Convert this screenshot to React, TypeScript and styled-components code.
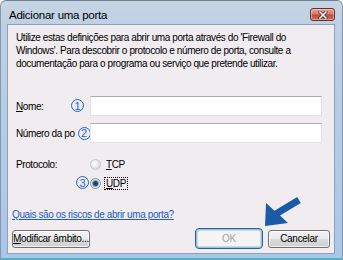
import React from 'react';
import styled, { createGlobalStyle } from 'styled-components';

const GlobalStyle = createGlobalStyle`
  html, body {
    margin: 0;
    padding: 0;
    background: #ffffff;
  }
  body {
    width: 343px;
    height: 260px;
    overflow: hidden;
    font-family: "Liberation Sans", Arial, sans-serif;
  }
`;

const Window = styled.div`
  position: relative;
  width: 343px;
  height: 260px;
  box-sizing: border-box;
  display: flex;
  flex-direction: column;
  padding: 0 7px 4px 6px;
  background: linear-gradient(to bottom, #c8d5e3 0px, #bdd0e5 24px, #aac7e8 100%);
  border-top: 1px solid #6f7f93;
  border-left: 1px solid #8797ab;
  border-right: 1px solid #8797ab;
  border-bottom: 2px solid #4fb0cc;
  border-radius: 6px 6px 0 0;
  overflow: hidden;
`;

const TitleBar = styled.div`
  height: 23px;
  flex: none;
  display: flex;
  justify-content: space-between;
  align-items: flex-start;
`;

const Title = styled.span`
  margin: 7px 0 0 2px;
  font-size: 11.5px;
  letter-spacing: -0.25px;
  line-height: 14px;
  color: #000;
`;

const CloseButton = styled.div`
  margin-top: 7px;
  width: 25px;
  height: 13px;
  box-sizing: border-box;
  display: flex;
  align-items: center;
  justify-content: center;
  border: 1px solid #6b2d28;
  border-radius: 3px;
  background: linear-gradient(to bottom, #e3a49c 0%, #d27a70 45%, #c04a3c 55%, #cc6a5c 100%);
  box-shadow: inset 0 0 0 1px rgba(255, 220, 210, 0.5);
`;

const Body = styled.div`
  flex: 1;
  display: flex;
  flex-direction: column;
  padding-bottom: 4px;
  background: #f0ecf0;
  border: 1px solid #8fa1b8;
`;

const Intro = styled.p`
  margin: 6px 8px 0 8px;
  font-size: 10px;
  letter-spacing: -0.4px;
  line-height: 13px;
  color: #000;
`;

const Form = styled.div`
  position: relative;
  margin: 26px 12px 0 8px;
  display: grid;
  grid-template-columns: 74px 232px;
  row-gap: 7px;
  align-items: center;
`;

const FieldLabel = styled.label`
  display: flex;
  align-items: center;
  font-size: 10px;
  letter-spacing: -0.4px;
  color: #000;
  white-space: nowrap;
`;

const TextBox = styled.input`
  width: 232px;
  height: 20px;
  box-sizing: border-box;
  margin: 0;
  padding: 0 3px;
  background: #fff;
  border: 1px solid #dfe3e9;
  border-top-color: #abadb3;
  outline: none;
`;

const ProtocolLabel = styled(FieldLabel)`
  align-self: start;
  margin-top: 5px;
  line-height: 19px;
`;

const RadioGroup = styled.div`
  margin-top: 5px;
  display: flex;
  flex-direction: column;
`;

const RadioRow = styled.div`
  height: 19px;
  display: flex;
  align-items: center;
  gap: 3px;
  font-size: 10px;
  letter-spacing: -0.4px;
  color: #000;
`;

const RadioDot = styled.span<{ $checked?: boolean }>`
  width: 11px;
  height: 11px;
  box-sizing: border-box;
  border-radius: 50%;
  border: 1px solid ${({ $checked }) => ($checked ? '#8d9aa4' : '#c4c8cc')};
  background: ${({ $checked }) =>
    $checked
      ? 'radial-gradient(circle, #1a3850 0, #284f6c 2px, #7fa6c2 3px, #dbe3ea 4px, #f4f4f4 6px)'
      : 'radial-gradient(circle at 40% 40%, #ffffff 0, #eeeeee 3px, #d6d6d6 6px)'};
`;

const RadioText = styled.span<{ $focused?: boolean }>`
  padding: 0 1px;
  line-height: 11px;
  border: 1px dotted ${({ $focused }) => ($focused ? '#000' : 'transparent')};
`;

const Marker = styled.span`
  width: 13px;
  height: 13px;
  flex: none;
  box-sizing: border-box;
  display: inline-flex;
  align-items: center;
  justify-content: center;
  border: 1.5px solid #2466c8;
  border-radius: 50%;
  background: #f0ecf0;
  color: #2466c8;
  font-size: 11px;
  letter-spacing: 0;
  line-height: 10px;
`;

const InlineMarker = styled(Marker)`
  margin: 0 0 0 3px;
`;

const PlacedMarker = styled(Marker)<{ $x: number; $y: number }>`
  position: absolute;
  left: ${({ $x }) => $x}px;
  top: ${({ $y }) => $y}px;
`;

const HelpLink = styled.a`
  align-self: flex-start;
  margin: 15px 0 0 4px;
  font-size: 10px;
  letter-spacing: -0.4px;
  line-height: 13px;
  color: #1f5bc6;
  text-decoration: underline;
`;

const Footer = styled.div`
  margin-top: auto;
  padding: 0 4px;
  display: flex;
  align-items: center;
  justify-content: space-between;
`;

const ButtonGroup = styled.div`
  display: flex;
  align-items: center;
  gap: 5px;
`;

const Button = styled.button<{ $width: number }>`
  width: ${({ $width }) => $width}px;
  height: 18px;
  box-sizing: border-box;
  margin: 0;
  padding: 0;
  font-family: "Liberation Sans", Arial, sans-serif;
  font-size: 10px;
  letter-spacing: -0.3px;
  color: #000;
  border: 1px solid #707070;
  border-radius: 3px;
  background: linear-gradient(to bottom, #f3f3f3 0%, #ebebeb 48%, #dcdcdc 52%, #cfcfcf 100%);
  box-shadow: inset 0 0 0 1px rgba(255, 255, 255, 0.7);
`;

const DefaultButton = styled(Button)`
  height: 21px;
  color: #a3a3a3;
  border: 1px solid #25609a;
  border-radius: 4px;
  background: #f4f4f4;
  box-shadow: inset 0 0 0 1px #8fc4ec, inset 0 0 0 2px #d6d6d6;
`;

const Overlay = styled.svg`
  position: absolute;
  top: -1px;
  left: -1px;
  width: 343px;
  height: 260px;
  pointer-events: none;
`;

export default function App() {
  return (
    <>
      <GlobalStyle />
      <Window>
        <TitleBar>
          <Title>Adicionar uma porta</Title>
          <CloseButton>
            <svg width="10" height="8" viewBox="0 0 10 8">
              <path d="M2 1 L8 7 M8 1 L2 7" stroke="#4a2a28" strokeWidth="3" strokeLinecap="square" />
              <path d="M2 1 L8 7 M8 1 L2 7" stroke="#ffffff" strokeWidth="1.5" strokeLinecap="square" />
            </svg>
          </CloseButton>
        </TitleBar>
        <Body>
          <Intro>
            Utilize estas definições para abrir uma porta através do 'Firewall do
            Windows'. Para descobrir o protocolo e número de porta, consulte a
            documentação para o programa ou serviço que pretende utilizar.
          </Intro>
          <Form>
            <FieldLabel><u>N</u>ome:</FieldLabel>
            <TextBox />
            <FieldLabel>Número da po<InlineMarker>2</InlineMarker>:</FieldLabel>
            <TextBox />
            <ProtocolLabel>Protocolo:</ProtocolLabel>
            <RadioGroup>
              <RadioRow>
                <RadioDot />
                <RadioText><u>T</u>CP</RadioText>
              </RadioRow>
              <RadioRow>
                <RadioDot $checked />
                <RadioText $focused><u>U</u>DP</RadioText>
              </RadioRow>
            </RadioGroup>
            <PlacedMarker $x={55} $y={3}>1</PlacedMarker>
            <PlacedMarker $x={60} $y={80}>3</PlacedMarker>
          </Form>
          <HelpLink>Quais são os riscos de abrir uma porta?</HelpLink>
          <Footer>
            <Button $width={78}><u>M</u>odificar âmbito...</Button>
            <ButtonGroup>
              <DefaultButton $width={68}>OK</DefaultButton>
              <Button $width={62}>Cancelar</Button>
            </ButtonGroup>
          </Footer>
        </Body>
        <Overlay viewBox="0 0 343 260">
          <polygon
            points="265,226 266,203 274.5,210.8 297.2,197 300.8,203 280,215.6 288,223"
            fill="#1b5ba6"
          />
        </Overlay>
      </Window>
    </>
  );
}
